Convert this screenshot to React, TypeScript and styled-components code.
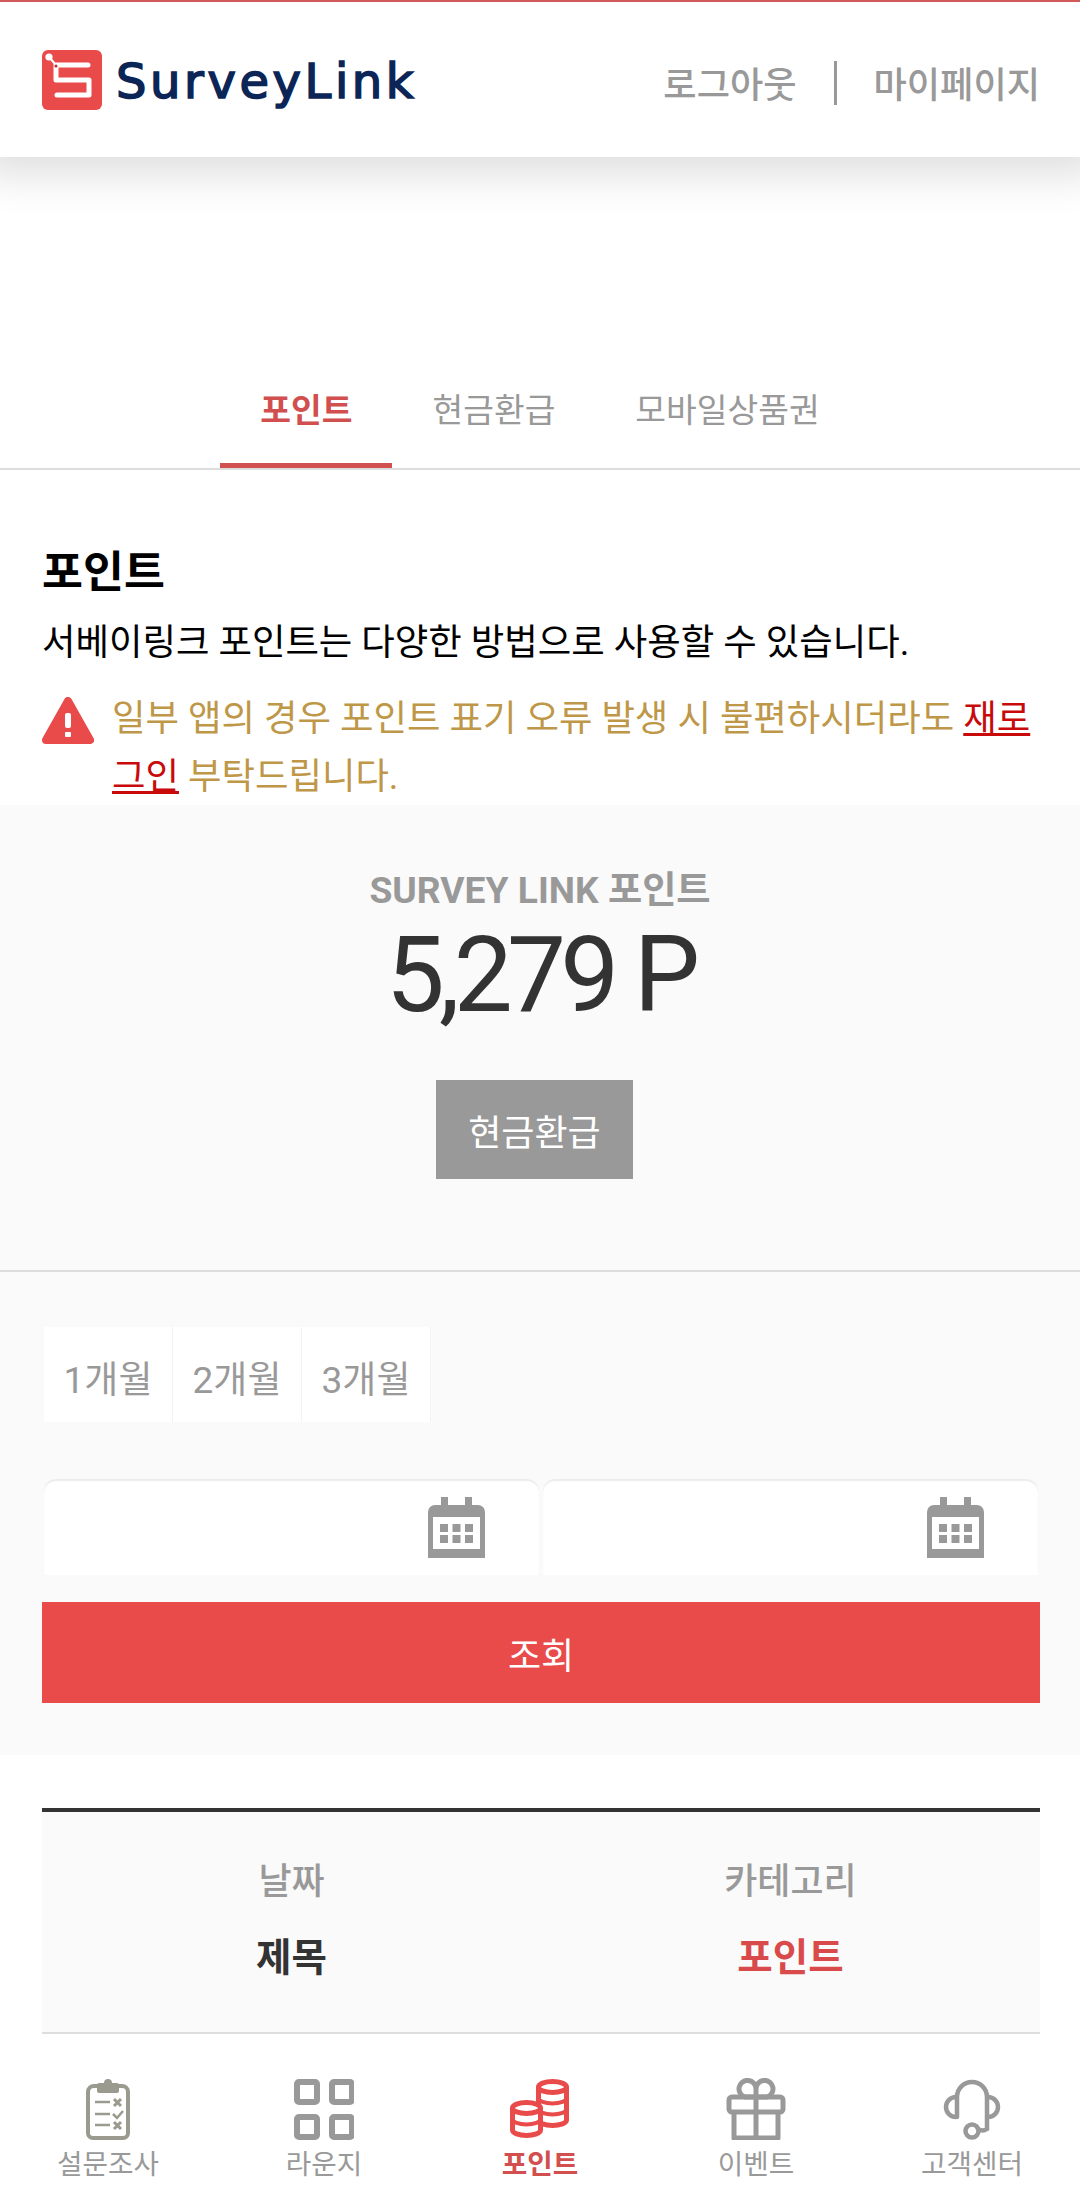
import React from 'react';
import styled, { createGlobalStyle } from 'styled-components';

const RED = '#e94a4a';
const GRAY = '#999999';
const LINE = '#dddddd';

const GlobalStyle = createGlobalStyle`
  html, body {
    margin: 0;
    padding: 0;
    background: #fff;
  }
  body {
    font-family: Roboto, "Noto Sans CJK KR", sans-serif;
    color: #000;
  }
  * {
    box-sizing: border-box;
  }
`;

const Page = styled.div`
  width: 1080px;
  height: 2202px;
  display: flex;
  flex-direction: column;
  overflow: hidden;
`;

const Header = styled.header`
  height: 157px;
  flex: none;
  display: flex;
  align-items: center;
  justify-content: space-between;
  padding: 0 40px 0 42px;
  background: #fff;
  border-top: 2px solid #d05a5a;
  box-shadow: 0 -2px 40px 20px rgba(0, 0, 0, 0.13);
`;

const Logo = styled.div`
  display: flex;
  align-items: center;
  gap: 14px;
`;

const LogoText = styled.span`
  padding-top: 2px;
  font-family: "DejaVu Sans", sans-serif;
  font-size: 48px;
  font-weight: 400;
  line-height: 60px;
  letter-spacing: 3.6px;
  color: #0b2556;
  -webkit-text-stroke: 1.6px #0b2556;
`;

const HeaderLinks = styled.nav`
  display: flex;
  align-items: center;
  margin-top: 6px;
`;

const HeaderLink = styled.a`
  padding-top: 6px;
  font-size: 36.2px;
  font-weight: 500;
  line-height: 50px;
  color: ${GRAY};
`;

const HeaderDivider = styled.span`
  width: 3px;
  height: 44px;
  margin: 0 37px;
  background: ${GRAY};
`;

const Tabs = styled.div`
  display: flex;
  justify-content: center;
  padding-top: 228px;
  border-bottom: 2px solid ${LINE};
`;

const Tab = styled.a<{ $active?: boolean }>`
  height: 83px;
  padding: 1px 40px 0;
  font-size: 33.4px;
  line-height: 50px;
  font-weight: ${(p) => (p.$active ? 700 : 400)};
  color: ${(p) => (p.$active ? '#d14f4f' : GRAY)};
  border-bottom: 5px solid ${(p) => (p.$active ? '#d14f4f' : 'transparent')};
`;

const Intro = styled.section`
  padding: 73px 30px 0 42px;
`;

const Title = styled.h2`
  margin: 0;
  font-size: 44.5px;
  font-weight: 700;
  line-height: 60px;
`;

const Lead = styled.p`
  margin: 12px 0 0;
  font-size: 36.4px;
  line-height: 56px;
`;

const Notice = styled.div`
  display: flex;
  gap: 18px;
  margin: 19px 0 -1px;
`;

const NoticeIcon = styled.svg`
  flex: none;
  width: 52px;
  height: 47px;
  margin-top: 7px;
`;

const NoticeText = styled.p`
  margin: 0;
  font-size: 36.4px;
  line-height: 58px;
  color: #be9748;

  a {
    color: #c80a0a;
    text-decoration: underline;
  }
`;

const PointPanel = styled.section`
  padding: 60px 0 91px;
  background: #fafafa;
  border-bottom: 2px solid ${LINE};
  text-align: center;
`;

const PointLabel = styled.div`
  font-size: 37.2px;
  font-weight: 700;
  line-height: 50px;
  color: ${GRAY};
`;

const PointValue = styled.div`
  margin-top: 6px;
  font-size: 105px;
  line-height: 110px;
  letter-spacing: -5.8px;
  color: #333;
`;

const RefundButton = styled.button`
  display: block;
  width: 197px;
  height: 99px;
  margin: 49px 0 0 436px;
  padding: 0;
  border: 0;
  background: ${GRAY};
  color: #fff;
  font: inherit;
  font-size: 36px;
`;

const FilterPanel = styled.section`
  padding: 55px 40px 52px 42px;
  background: #fafafa;
`;

const Periods = styled.div`
  display: flex;
  margin-left: 2px;
`;

const Period = styled.a`
  width: 129px;
  height: 95px;
  display: flex;
  align-items: center;
  justify-content: center;
  padding-top: 5px;
  background: #fff;
  border-right: 1px solid #f3f3f3;
  font-size: 37px;
  color: ${GRAY};
`;

const DateRow = styled.div`
  display: grid;
  grid-template-columns: 495px 495px;
  gap: 4px;
  margin: 57px 0 0 2px;
`;

const DateField = styled.div`
  height: 96px;
  display: flex;
  align-items: center;
  justify-content: flex-end;
  padding: 0 54px 0 0;
  background: #fff;
  border-radius: 12px 12px 0 0;
  box-shadow: inset 0 2px 1px #ececec;
`;

const SearchButton = styled.button`
  display: block;
  width: 998px;
  height: 101px;
  margin-top: 27px;
  padding: 0;
  border: 0;
  background: ${RED};
  color: #fff;
  font: inherit;
  font-size: 36px;
`;

const Table = styled.section`
  display: grid;
  grid-template-columns: 1fr 1fr;
  row-gap: 26px;
  margin: 53px 40px 0 42px;
  padding: 45px 0 49px;
  background: #fafafa;
  border-top: 4px solid #333;
  border-bottom: 2px solid ${LINE};
  text-align: center;
`;

const Cell = styled.div<{ $tone: 'muted' | 'dark' | 'red' }>`
  font-size: ${(p) => (p.$tone === 'muted' ? 36 : 38.5)}px;
  line-height: 50px;
  font-weight: ${(p) => (p.$tone === 'muted' ? 500 : 700)};
  color: ${(p) =>
    p.$tone === 'muted' ? GRAY : p.$tone === 'red' ? '#d94a4a' : '#333'};
`;

const BottomNav = styled.nav`
  margin-top: auto;
  display: grid;
  grid-template-columns: repeat(5, 1fr);
  padding: 18px 0 17px;
  background: #fff;
`;

const NavItem = styled.a<{ $active?: boolean }>`
  display: flex;
  flex-direction: column;
  align-items: center;
  font-size: 27.7px;
  line-height: 40px;
  font-weight: ${(p) => (p.$active ? 700 : 400)};
  color: ${(p) => (p.$active ? '#d14f4f' : GRAY)};
`;

const NavIcon = styled.svg`
  display: block;
  height: 62px;
  margin-bottom: 5px;
`;

const LogoMark = () => (
  <svg width="60" height="60" viewBox="0 0 60 60">
    <rect width="60" height="60" rx="6" fill={RED} />
    <g fill="none" stroke="#fff" strokeWidth="5" strokeLinecap="round" strokeLinejoin="round">
      <path d="M46 15H14v15h33v15H15" />
    </g>
    <path d="M7 7l7 8" stroke="#fff" strokeWidth="2" />
    <circle cx="7" cy="7" r="3.6" fill="#fff" />
    <circle cx="14" cy="16" r="1.6" fill="#b83434" />
  </svg>
);

const WarningIcon = () => (
  <NoticeIcon viewBox="0 0 52 47">
    <path d="M26 4 L48 43 H4 Z" fill={RED} stroke={RED} strokeWidth="8" strokeLinejoin="round" />
    <rect x="23" y="16" width="6" height="15" rx="2" fill="#fff" />
    <rect x="23" y="35" width="6" height="5" rx="1" fill="#fff" />
  </NoticeIcon>
);

const CalendarIcon = () => (
  <svg width="57" height="61" viewBox="0 0 57 61">
    <path
      d="M13 0h7v8h17V0h7v8h6a7 7 0 0 1 7 7v46H0V15a7 7 0 0 1 7-7h6z"
      fill={GRAY}
    />
    <rect x="5" y="20" width="47" height="32" fill="#fff" />
    {[12, 24.5, 37].map((x) =>
      [27, 38].map((y) => <rect key={`${x}-${y}`} x={x} y={y} width="8" height="8" fill={GRAY} />),
    )}
  </svg>
);

const ClipboardIcon = () => (
  <NavIcon width="44" viewBox="0 0 44 62">
    <g fill="none" stroke="#9a9a8f">
      <path d="M12 8H8a6 6 0 0 0-6 6v41a5 5 0 0 0 5 5h30a5 5 0 0 0 5-5V14a6 6 0 0 0-6-6h-4" strokeWidth="4" />
      <path d="M9 24h15M9 36h15M9 47h15" strokeWidth="2.5" />
      <path d="M28 21l7 7M35 21l-7 7M28 44l7 7M35 44l-7 7" strokeWidth="3" />
      <path d="M27 36l4 4 6-7" strokeWidth="2.5" />
    </g>
    <path d="M13 5h5a4 4 0 0 1 8 0h5a2 2 0 0 1 2 2v6a2 2 0 0 1-2 2H13a2 2 0 0 1-2-2V7a2 2 0 0 1 2-2z" fill="#9a9a8f" />
  </NavIcon>
);

const GridIcon = () => (
  <NavIcon width="60" viewBox="0 0 60 62">
    <g fill="none" stroke={GRAY} strokeWidth="6">
      <rect x="3" y="4" width="20" height="20" rx="2" />
      <rect x="38" y="4" width="20" height="20" rx="2" />
      <rect x="3" y="39" width="20" height="20" rx="2" />
      <rect x="38" y="39" width="20" height="20" rx="2" />
    </g>
  </NavIcon>
);

const CoinStack = ({ x, top, layers }: { x: number; top: number; layers: number }) => {
  const rx = 14;
  const ry = 5.5;
  const cx = x + rx + 2.5;
  const cy = top + ry + 2.5;
  const step = 11;
  const bottom = cy + layers * step;
  return (
    <g fill="#fff" stroke={RED} strokeWidth="5">
      <path d={`M${cx - rx} ${cy}V${bottom}A${rx} ${ry} 0 0 0 ${cx + rx} ${bottom}V${cy}`} />
      {Array.from({ length: layers - 1 }, (_, i) => (
        <path
          key={i}
          fill="none"
          strokeWidth="4"
          d={`M${cx - rx} ${cy + (i + 1) * step}A${rx} ${ry} 0 0 0 ${cx + rx} ${cy + (i + 1) * step}`}
        />
      ))}
      <ellipse cx={cx} cy={cy} rx={rx} ry={ry} />
    </g>
  );
};

const CoinsIcon = () => (
  <NavIcon width="60" viewBox="0 0 60 62">
    <CoinStack x={26} top={1} layers={3} />
    <CoinStack x={0} top={22} layers={2} />
  </NavIcon>
);

const GiftIcon = () => (
  <NavIcon width="60" viewBox="0 0 60 62">
    <g fill="none" stroke={GRAY} strokeWidth="5" strokeLinejoin="round">
      <rect x="3" y="19" width="54" height="15" rx="3" />
      <path d="M8 34v26h44V34" />
      <path d="M30 19v41" />
      <path d="M30 19h-11a8.5 8.5 0 1 1 11-8.500zM30 19h11a8.500 8.500 0 1 0-11-8.500z" />
    </g>
  </NavIcon>
);

const HeadsetIcon = () => (
  <NavIcon width="60" viewBox="0 0 60 62">
    <g fill="none" stroke={GRAY} strokeWidth="4.500">
      <path d="M15 39V19a15 15 0 0 1 30 0v32a8 8 0 0 1-9 0" strokeLinecap="round" />
      <path d="M14 19a10 10 0 0 0 0 20" />
      <path d="M46 19a10 10 0 0 1 0 20" />
      <circle cx="30" cy="53" r="6.500" />
    </g>
  </NavIcon>
);

export default function App() {
  return (
    <Page>
      <GlobalStyle />
      <Header>
        <Logo>
          <LogoMark />
          <LogoText>SurveyLink</LogoText>
        </Logo>
        <HeaderLinks>
          <HeaderLink>로그아웃</HeaderLink>
          <HeaderDivider />
          <HeaderLink>마이페이지</HeaderLink>
        </HeaderLinks>
      </Header>

      <Tabs>
        <Tab $active>포인트</Tab>
        <Tab>현금환급</Tab>
        <Tab>모바일상품권</Tab>
      </Tabs>

      <Intro>
        <Title>포인트</Title>
        <Lead>서베이링크 포인트는 다양한 방법으로 사용할 수 있습니다.</Lead>
        <Notice>
          <WarningIcon />
          <NoticeText>
            일부 앱의 경우 포인트 표기 오류 발생 시 불편하시더라도 <a>재로그인</a> 부탁드립니다.
          </NoticeText>
        </Notice>
      </Intro>

      <PointPanel>
        <PointLabel>SURVEY LINK 포인트</PointLabel>
        <PointValue>5,279 P</PointValue>
        <RefundButton>현금환급</RefundButton>
      </PointPanel>

      <FilterPanel>
        <Periods>
          <Period>1개월</Period>
          <Period>2개월</Period>
          <Period>3개월</Period>
        </Periods>
        <DateRow>
          <DateField>
            <CalendarIcon />
          </DateField>
          <DateField>
            <CalendarIcon />
          </DateField>
        </DateRow>
        <SearchButton>조회</SearchButton>
      </FilterPanel>

      <Table>
        <Cell $tone="muted">날짜</Cell>
        <Cell $tone="muted">카테고리</Cell>
        <Cell $tone="dark">제목</Cell>
        <Cell $tone="red">포인트</Cell>
      </Table>

      <BottomNav>
        <NavItem>
          <ClipboardIcon />
          설문조사
        </NavItem>
        <NavItem>
          <GridIcon />
          라운지
        </NavItem>
        <NavItem $active>
          <CoinsIcon />
          포인트
        </NavItem>
        <NavItem>
          <GiftIcon />
          이벤트
        </NavItem>
        <NavItem>
          <HeadsetIcon />
          고객센터
        </NavItem>
      </BottomNav>
    </Page>
  );
}
